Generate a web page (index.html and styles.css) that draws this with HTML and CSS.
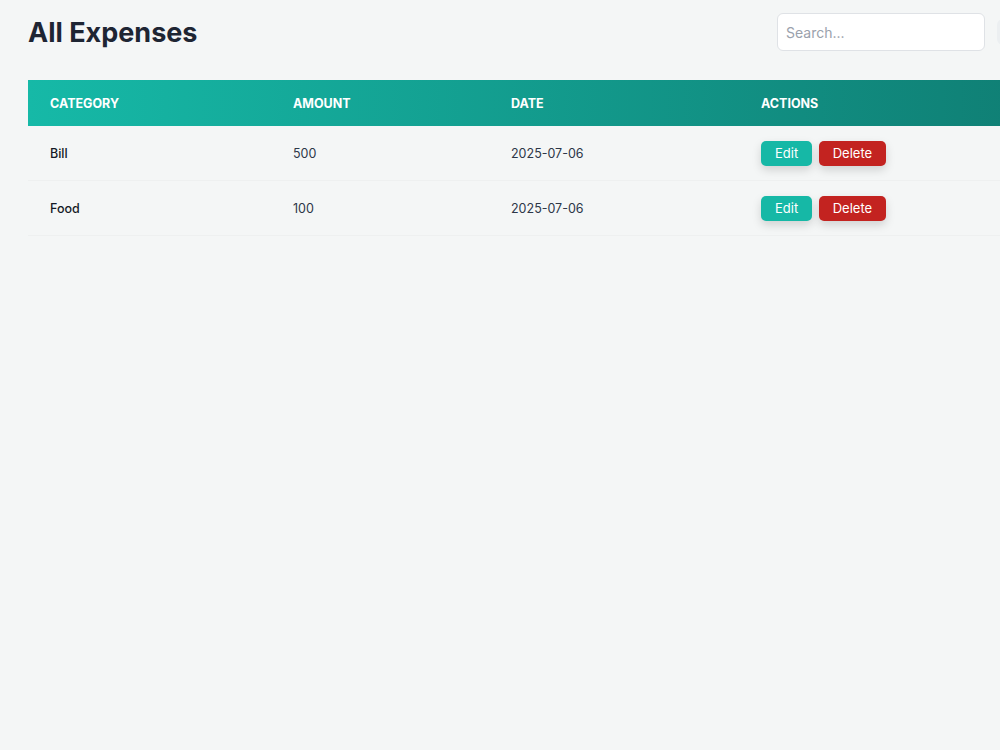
FILE: index.html
```html
<!DOCTYPE html>
<html lang="en">
<head>
    <meta charset="UTF-8">
    <meta name="viewport" content="width=device-width, initial-scale=1.0">
    <title>All Expenses</title>
    <link rel="stylesheet" href="styles.css">
</head>
<body>

    <div class="page">
        <div class="page-header">
            <h1 class="title">All Expenses</h1>
            <div class="toolbar">
                <input type="text" class="search" placeholder="Search...">
                <div class="filter-btn"></div>
            </div>
        </div>

        <!-- Таблица расходов -->
        <table class="expenses">
            <thead>
                <tr>
                    <th class="col-category">Category</th>
                    <th class="col-amount">Amount</th>
                    <th class="col-date">Date</th>
                    <th>Actions</th>
                </tr>
            </thead>
            <tbody>
                <tr>
                    <td class="category">Bill</td>
                    <td>500</td>
                    <td>2025-07-06</td>
                    <td>
                        <button class="btn btn-edit">Edit</button>
                        <button class="btn btn-delete">Delete</button>
                    </td>
                </tr>
                <tr>
                    <td class="category">Food</td>
                    <td>100</td>
                    <td>2025-07-06</td>
                    <td>
                        <button class="btn btn-edit">Edit</button>
                        <button class="btn btn-delete">Delete</button>
                    </td>
                </tr>
            </tbody>
        </table>
    </div>

</body>
</html>
```

FILE: styles.css
```css
body {
    font-family: Inter, "Noto Sans", sans-serif;
    background-color: #f4f6f6;
    margin: 0;
    overflow: hidden;
    color: #1f2937;
}
.page {
    width: 1069px;
    padding: 13px 28px 0 28px;
}
.page-header {
    display: flex;
    justify-content: space-between;
    align-items: center;
    margin-bottom: 29px;
}
.title {
    margin: 0;
    font-size: 27px;
    font-weight: 700;
    color: #1e2533;
}
.toolbar {
    display: flex;
    align-items: center;
    gap: 12px;
}
.search {
    width: 208px;
    height: 38px;
    box-sizing: border-box;
    padding: 0 8px;
    border: 1px solid #dfe2e6;
    border-radius: 6px;
    background-color: #ffffff;
    font-family: inherit;
    font-size: 14px;
    color: #1f2937;
}
.search::placeholder {
    color: #9aa1ac;
}
.filter-btn {
    width: 100px;
    height: 26px;
    border-radius: 6px;
    background-color: #eceff1;
}
/* Таблица */
.expenses {
    width: 100%;
    border-collapse: collapse;
}
.expenses thead tr {
    background: linear-gradient(90deg, #16b9a7, #0f7b71);
}
.expenses th {
    text-align: left;
    color: #ffffff;
    font-size: 12.5px;
    font-weight: 700;
    text-transform: uppercase;
    padding: 0 22px;
    height: 46px;
}
.col-category {
    width: 199px;
}
.col-amount {
    width: 174px;
}
.col-date {
    width: 206px;
}
.expenses td {
    font-size: 12.5px;
    color: #2d3748;
    padding: 0 22px;
    height: 54px;
    border-bottom: 1px solid #eef0f0;
}
.expenses td.category {
    color: #141a26;
    font-weight: 500;
}
/* Кнопки */
.btn {
    border: none;
    border-radius: 5px;
    color: #ffffff;
    font-family: inherit;
    font-size: 13px;
    height: 25px;
    padding: 0 14px;
    box-shadow: 0 4px 10px rgba(0, 0, 0, 0.15);
    cursor: pointer;
}
.btn-edit {
    background-color: #16b8a6;
}
.btn-delete {
    background-color: #c32320;
    margin-left: 3px;
}
```
